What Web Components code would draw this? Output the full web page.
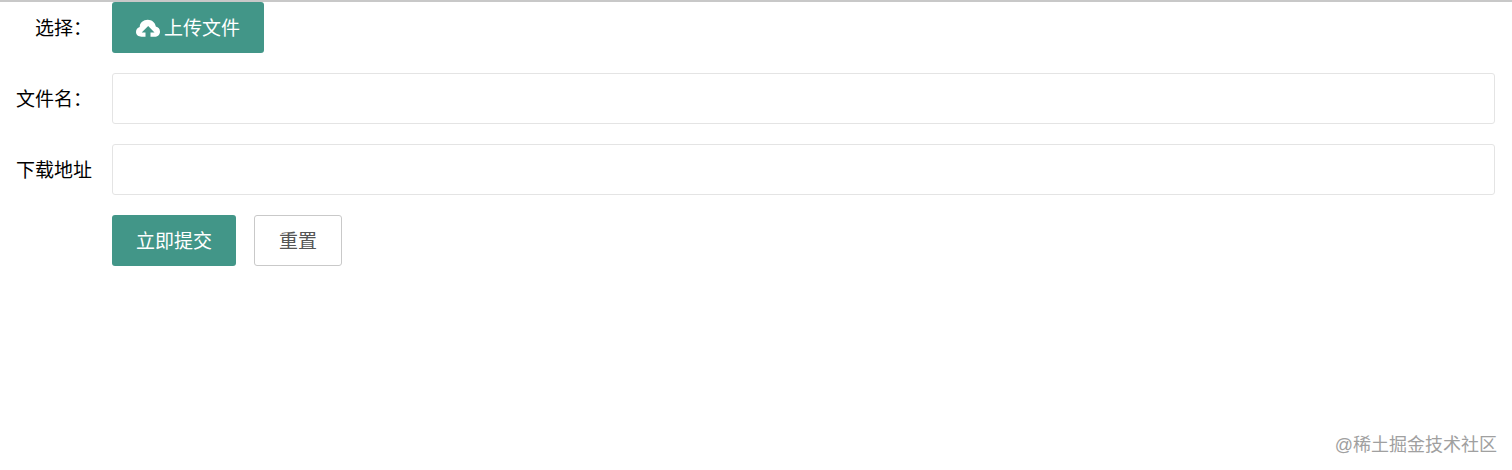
<!DOCTYPE html>
<html lang="zh-CN">
<head>
<meta charset="utf-8">
<title>上传文件</title>
<style>
body { margin: 0; background: #fff; color: #000; font: 19px/24px "Liberation Sans", "Noto Sans CJK SC", sans-serif; }
</style>
</head>
<body>
<upload-page></upload-page>

<script>
class FormRow extends HTMLElement {
  constructor() {
    super();
    this.attachShadow({ mode: 'open' }).innerHTML = `
      <style>
        :host { display: flex; min-height: 51px; }
        .label { box-sizing: border-box; flex: 0 0 112px; padding: 15px 20px 0 0; text-align: right; white-space: nowrap; }
        .content { flex: 1; display: flex; gap: 18px; min-width: 0; }
      </style>
      <div class="label"><slot name="label"></slot></div>
      <div class="content"><slot></slot></div>`;
  }
}
customElements.define('form-row', FormRow);

class TextField extends HTMLElement {
  constructor() {
    super();
    this.attachShadow({ mode: 'open' }).innerHTML = `
      <style>
        :host { display: flex; min-height: 51px; }
        label { box-sizing: border-box; flex: 0 0 112px; padding: 15px 20px 0 0; text-align: right; white-space: nowrap; }
        input { box-sizing: border-box; flex: 1; min-width: 0; height: 51px; margin: 0; padding: 0 12px; border: 1px solid #e4e4e4; border-radius: 3px; background: #fff; font: inherit; color: inherit; outline: none; }
        input:focus { border-color: #c9c9c9; }
      </style>
      <label for="field"><slot></slot></label>
      <input id="field" type="text" autocomplete="off">`;
  }
}
customElements.define('text-field', TextField);

class ActionButton extends HTMLElement {
  constructor() {
    super();
    this.attachShadow({ mode: 'open' }).innerHTML = `
      <style>
        :host { display: block; }
        button { display: flex; align-items: center; gap: 4px; box-sizing: border-box; height: 51px; margin: 0; padding: 2px 24px 0; border: 0; border-radius: 3px; background: #429688; color: #fff; font: inherit; white-space: nowrap; cursor: pointer; }
        :host([plain]) button { border: 1px solid #c9c9c9; background: #fff; color: #555; }
        button:hover { opacity: .85; }
      </style>
      <button type="button"><slot name="icon"></slot><slot></slot></button>`;
  }
}
customElements.define('action-button', ActionButton);

class CloudIcon extends HTMLElement {
  constructor() {
    super();
    this.attachShadow({ mode: 'open' }).innerHTML = `
      <style>
        :host { display: block; width: 24px; height: 24px; }
        svg { display: block; }
      </style>
      <svg width="24" height="24" viewBox="0 0 24 24" fill="currentColor" aria-hidden="true">
        <path d="M9.500 19.700H5.500C2.500 19.700 0 17.900 0 15c0-2.700 1.500-4.400 3.700-5C3.700 5.700 7.500 2.700 11.700 2.700c4.200 0 7.600 2.800 8.100 6.900 2.600.5 4.200 2.600 4.200 5.100 0 3-2.400 5-5.400 5H14.500V15.400h4L12.200 8.900 5.700 15.400h3.800z"/>
      </svg>`;
  }
}
customElements.define('cloud-icon', CloudIcon);

class UploadPage extends HTMLElement {
  constructor() {
    super();
    this.attachShadow({ mode: 'open' }).innerHTML = `
      <style>
        :host { display: flex; flex-direction: column; box-sizing: border-box; min-height: 100vh; border-top: 2px solid #c8c8c8; }
        form { display: flex; flex-direction: column; gap: 20px; padding-right: 17px; }
        footer { margin-top: auto; padding: 0 15px 13px 0; text-align: right; font-size: 18px; color: #a0a0a0; }
      </style>
      <form>
        <form-row>
          <span slot="label">选择：</span>
          <action-button><cloud-icon slot="icon"></cloud-icon>上传文件</action-button>
        </form-row>
        <text-field>文件名：</text-field>
        <text-field>下载地址</text-field>
        <form-row>
          <action-button>立即提交</action-button>
          <action-button plain>重置</action-button>
        </form-row>
      </form>
      <footer>@稀土掘金技术社区</footer>`;
  }
}
customElements.define('upload-page', UploadPage);
</script>
</body>
</html>
